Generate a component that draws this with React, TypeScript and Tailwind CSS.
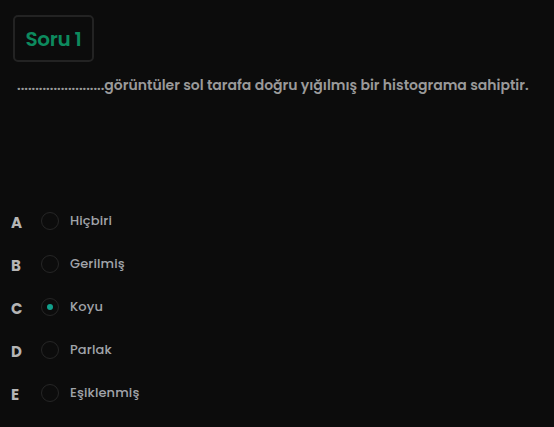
const FONT = "font-['Poppins','Inter','Liberation_Sans',sans-serif]";

const OPTIONS = [
  { key: "A", label: "Hiçbiri" },
  { key: "B", label: "Gerilmiş" },
  { key: "C", label: "Koyu" },
  { key: "D", label: "Parlak" },
  { key: "E", label: "Eşiklenmiş" },
];

function OptionRow({ letter, label, selected }: { letter: string; label: string; selected?: boolean }) {
  return (
    <div className="flex items-center h-[43px]">
      <span className="w-[41px] pl-[11px] text-[15px] font-bold text-[#b5b5b5] leading-none mt-[4px]">
        {letter}
      </span>
      <span className="w-[18px] h-[18px] rounded-full border border-[#262626] flex items-center justify-center">
        {selected && <span className="w-[6px] h-[6px] rounded-full bg-[#12a08c]" />}
      </span>
      <span className="ml-[11px] text-[13px] font-medium text-[#a1a4aa] tracking-[0.01em]">{label}</span>
    </div>
  );
}

export default function App() {
  return (
    <div className={`min-h-[427px] w-[554px] bg-[#0c0c0c] ${FONT}`}>
      <div className="pl-[13px] pt-[15px]">
        <div className="w-[81px] h-[47px] rounded-[5px] border-2 border-[#232323] flex items-center justify-center">
          <span className="text-[20px] font-semibold text-[#0d8a5e] tracking-[-0.02em]">Soru 1</span>
        </div>
      </div>
      <p className="pl-[17px] mt-[13px] text-[14px] font-semibold text-[#9a9a9a]">
        ........................görüntüler sol tarafa doğru yığılmış bir histograma sahiptir.
      </p>
      <div className="mt-[103px] flex flex-col">
        {OPTIONS.map((o) => (
          <OptionRow key={o.key} letter={o.key} label={o.label} selected={o.key === "C"} />
        ))}
      </div>
    </div>
  );
}
